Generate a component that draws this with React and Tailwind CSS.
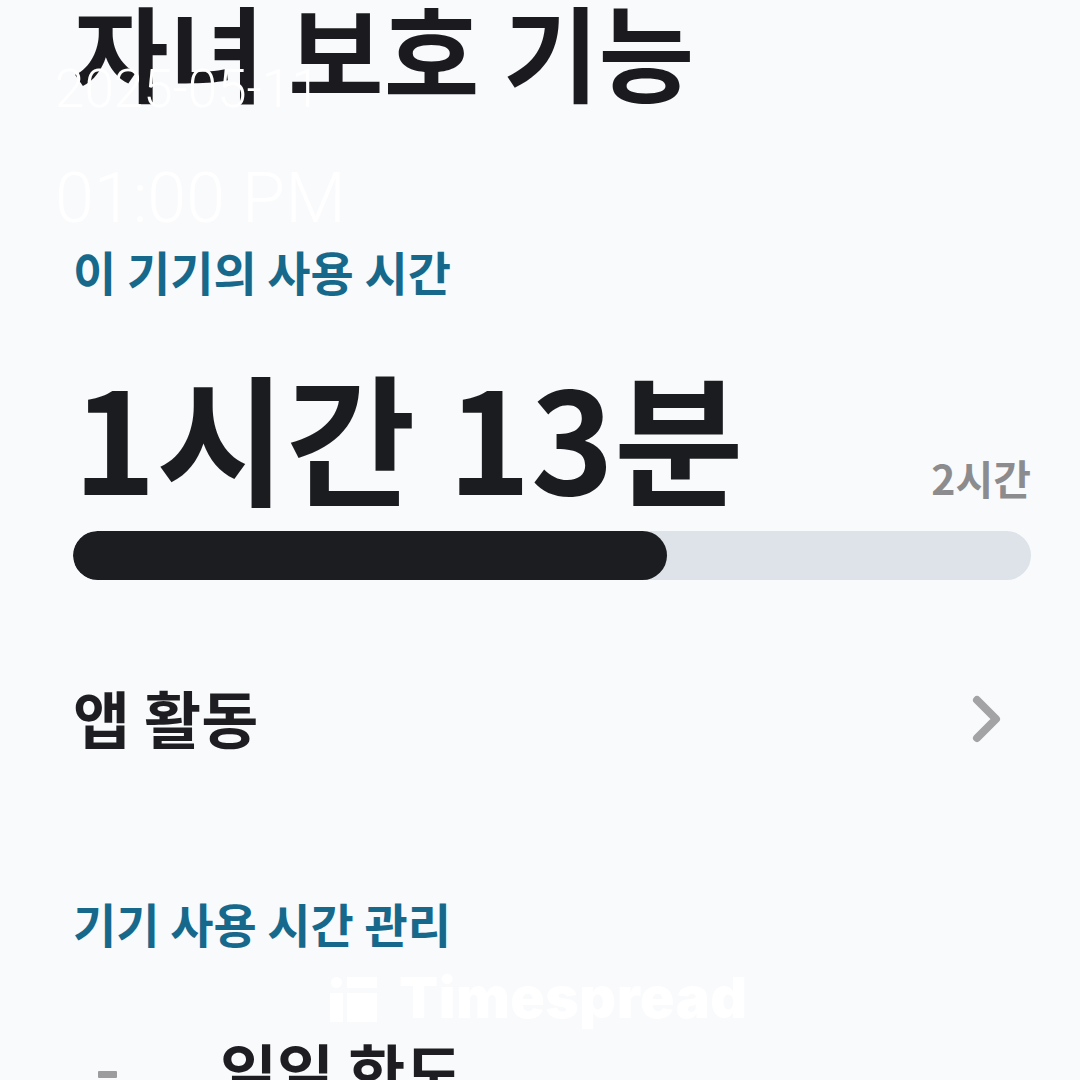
const used = 73
const limit = 120

function Chevron() {
  return (
    <svg width="40" height="54" viewBox="0 0 40 54" fill="none" className="shrink-0">
      <polyline points="11,8 30,27 11,46" stroke="#a3a3a5" strokeWidth="8" strokeLinecap="round" strokeLinejoin="round" />
    </svg>
  )
}

function TimerIcon() {
  return (
    <svg width="40" height="60" viewBox="0 0 40 60" fill="none" className="shrink-0">
      <rect x="10" y="3" width="19" height="7" rx="1" fill="#9c9c9e" />
      <circle cx="20" cy="34" r="17" stroke="#9c9c9e" strokeWidth="6" />
    </svg>
  )
}

function Logo() {
  return (
    <svg width="48" height="46" viewBox="0 0 48 46" fill="#ffffff">
      <circle cx="6.5" cy="5.5" r="5.5" />
      <rect x="0" y="16" width="13" height="29" />
      <rect x="17" y="0" width="30" height="11" />
      <rect x="17" y="16" width="30" height="29" />
    </svg>
  )
}

export default function App() {
  const pct = Math.min(100, (used / limit) * 100) + 1.2

  return (
    <div className="relative w-[1080px] h-[1080px] overflow-hidden bg-[#f9fafc] font-['Noto_Sans_CJK_KR',sans-serif]">
      <div className="pl-[73px] pr-[49px]">
        <h1 className="text-[104px] leading-none font-bold text-[#1b1b1f] -mt-[2px]">자녀 보호 기능</h1>

        <h2 className="mt-[145px] text-[47px] leading-none font-bold text-[#16698b]">이 기기의 사용 시간</h2>

        <div className="mt-[69px] flex items-baseline justify-between">
          <span className="text-[141px] leading-none font-bold text-[#1b1c1f]">1시간 13분</span>
          <span className="text-[41px] leading-none font-bold text-[#8c8c8e]">2시간</span>
        </div>

        <div className="mt-[27px] h-[49px] rounded-full bg-[#dde3e9] overflow-hidden">
          <div className="h-full rounded-full bg-[#1b1d20]" style={{ width: `${pct}%` }} />
        </div>

        <div className="mt-[106px] flex items-center justify-between">
          <span className="text-[62px] leading-none font-bold text-[#1e1e22]">앱 활동</span>
          <span className="mr-[25px] mt-[4px]">
            <Chevron />
          </span>
        </div>

        <h2 className="mt-[151px] text-[47px] leading-none font-bold text-[#16698b]">기기 사용 시간 관리</h2>

        <div className="mt-[93px] flex items-start">
          <div className="ml-[15px] mt-[29px]">
            <TimerIcon />
          </div>
          <span className="ml-[92px] text-[62px] leading-none font-bold text-[#1e1e22]">일일 한도</span>
        </div>
      </div>

      {/* timestamp stamp */}
      <div className="absolute left-[55px] top-[63px] font-['Roboto',sans-serif] font-light text-white">
        <div className="text-[53px] leading-none">2025-05-11</div>
        <div className="mt-[47px] text-[70px] leading-none">01:00 PM</div>
      </div>

      {/* watermark */}
      <div className="absolute left-[330px] top-[969px] flex items-start gap-[21px] text-white/95">
        <div className="mt-[8px]">
          <Logo />
        </div>
        <span className="font-['Inter',sans-serif] font-black text-[57px] leading-none tracking-[0.5px]">Timespread</span>
      </div>
    </div>
  )
}
